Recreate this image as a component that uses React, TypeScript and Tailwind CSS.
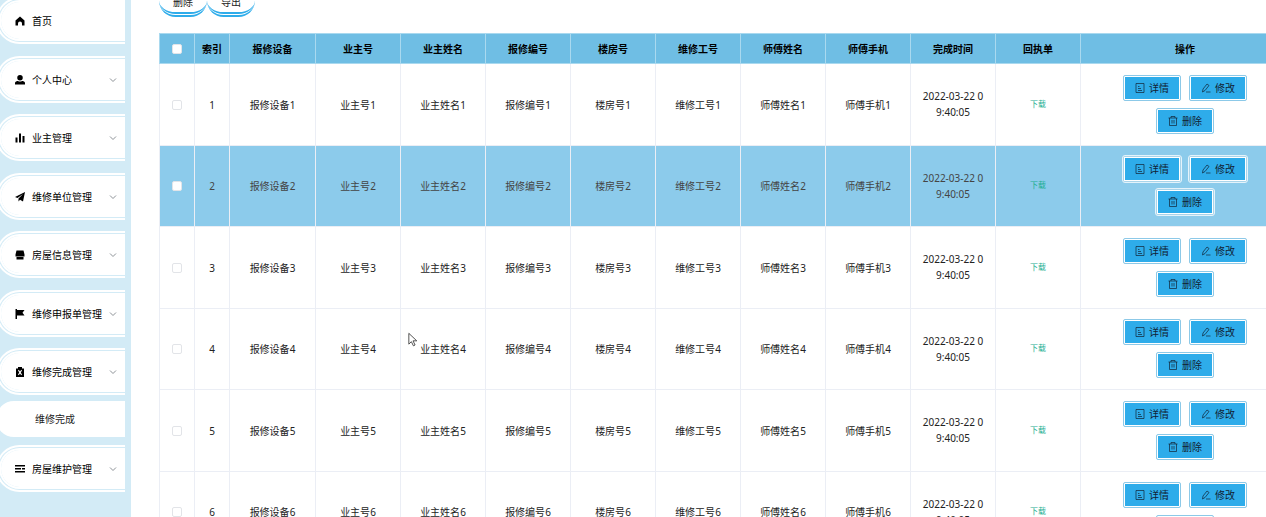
import { Fragment } from "react";
import type { ReactNode } from "react";

const icon = "h-[10px] w-[10px] shrink-0";

function Solid({ d }: { d: string }) {
  return (
    <svg viewBox="0 0 20 20" className={icon} fill="currentColor" fillRule="evenodd" aria-hidden="true">
      <path d={d} />
    </svg>
  );
}

const shapes = {
  home: "M10 1 1 9v10h5v-4a4 4 0 0 1 8 0v4h5V9z",
  user: "M10 0a5.500 5.500 0 1 1 0 11a5.500 5.500 0 0 1 0-11zM0 19v-3c0-3 4-4 6-4 2 1.500 6 1.500 8 0 2 0 6 1 6 4v3z",
  chart: "M1 9h4v10H1zM8 1h4v18H8zM15 6h4v13h-4z",
  plane: "M20 0 16 19 10 15.500 7 19v-6L16 4 5 12 0 10z",
  shop: "M3 1h14l2 8v4H1V9zM3 14h14v5H3z",
  flag: "M1 0h3v2h15l-4 5.500 4 5.500H4v7H1z",
  clip: "M2 3h4V0h8v3h4v17H2zM6 7l2.500 4L6 15l1.500 1.500L10 13l2.500 3.500L14 15l-2.500-4L14 7l-1.500-1.500L10 9 7.500 5.500z",
  list: "M0 2h20v3H0zM0 8h12v3H0zM14 8h6v3h-6zM0 14h20v3H0z",
};

const menu: { label: string; shape: string; sub?: string; leaf?: boolean }[] = [
  { label: "首页", shape: shapes.home, leaf: true },
  { label: "个人中心", shape: shapes.user },
  { label: "业主管理", shape: shapes.chart },
  { label: "维修单位管理", shape: shapes.plane },
  { label: "房屋信息管理", shape: shapes.shop },
  { label: "维修申报单管理", shape: shapes.flag },
  { label: "维修完成管理", shape: shapes.clip, sub: "维修完成" },
  { label: "房屋维护管理", shape: shapes.list },
];

function Outline({ children }: { children: ReactNode }) {
  return (
    <svg viewBox="0 0 20 20" className={icon} fill="none" stroke="currentColor" strokeWidth="1.4" aria-hidden="true">
      {children}
    </svg>
  );
}

const actions = [
  { label: "详情", art: <path d="M2 1h16v18H2zM6 7h3M6 11h6M6 15h8" /> },
  { label: "修改", art: <path d="M4 12 12 2l4 3-8 10-5 3zM10 18h9" /> },
  { label: "删除", art: <path d="M1 4h18M6 4V1h8v3M3 4v15h14V4M8 8v7M12 8v7" /> },
];

const columns = ["报修设备", "业主号", "业主姓名", "报修编号", "楼房号", "维修工号", "师傅姓名", "师傅手机"];
const rows = [1, 2, 3, 4, 5, 6];
const box = "mx-auto block h-[10px] w-[10px] appearance-none rounded-[2px] border border-[#e2e4e8] bg-white";
const cell = "border border-[#ebeef5] p-0";
const head = "border border-[#a9d9ef] p-0 font-bold";
const frame = "rounded-[3px] border p-px";

export default function App() {
  return (
    <div className="flex h-screen overflow-hidden bg-white font-['Noto_Sans','Noto_Sans_CJK_SC',sans-serif] text-[10px] leading-4 text-[#222]">
      <nav className="w-[131px] shrink-0 overflow-hidden bg-[#d3ebf6] pr-[6px]">
        <ul className="-mt-[3px] -ml-1">
          {menu.map((m) => (
            <Fragment key={m.label}>
              <li className="mb-3 even:mb-[11px] last:mb-0 has-[+.sub]:mb-[6px]">
                <button className="flex h-[47px] w-full items-center rounded-l-[26px] border-[5px] border-r-0 border-double border-white bg-white bg-clip-padding pr-2 pl-[14px] text-black">
                  <Solid d={m.shape} />
                  <span className="ml-[7px] whitespace-nowrap">{m.label}</span>
                  {!m.leaf && (
                    <svg viewBox="0 0 8 8" className="ml-auto h-2 w-2 shrink-0" fill="none" stroke="#8d9297" aria-hidden="true">
                      <path d="M1 2.500 4 5.500 7 2.500" />
                    </svg>
                  )}
                </button>
              </li>
              {m.sub && (
                <li className="sub mb-2">
                  <a href="#done" className="flex h-9 items-center rounded-l-[18px] bg-white pl-[39px]">
                    {m.sub}
                  </a>
                </li>
              )}
            </Fragment>
          ))}
        </ul>
      </nav>
      <main className="min-w-0 flex-1 overflow-hidden pl-7">
        <div className="-mt-4 flex">
          {["删除", "导出"].map((t) => (
            <button key={t} className="flex h-[33px] w-12 items-center justify-center rounded-[20px] border-b-[5px] border-double border-[#2eacea] bg-white pt-[7px]">
              {t}
            </button>
          ))}
        </div>
        <table className="mt-4 w-[calc(100%+24px)] table-fixed border-collapse text-center">
          <colgroup>
            <col className="w-[35px]" />
            <col className="w-[35px]" />
            <col className="w-[86px]" />
            {[...columns.slice(1), "time", "file"].map((c) => (
              <col key={c} className="w-[85px]" />
            ))}
            <col />
          </colgroup>
          <thead>
            <tr className="h-[30px] bg-[#6fbee4] text-black">
              <th className={head}>
                <input type="checkbox" aria-label="全选" className={box} />
              </th>
              {["索引", ...columns, "完成时间", "回执单", "操作"].map((c) => (
                <th key={c} className={head}>{c}</th>
              ))}
            </tr>
          </thead>
          <tbody>
            {rows.map((n) => (
              <tr key={n} className={n === 2 ? "h-[81px] bg-[#8ccbeb] text-[#444]" : "h-[82px] even:h-[81px]"}>
                <td className={cell}>
                  <input type="checkbox" aria-label={`选择${n}`} className={box} />
                </td>
                <td className={cell}>{n}</td>
                {columns.map((c) => (
                  <td key={c} className={cell}>{c}{n}</td>
                ))}
                <td className={`${cell} pb-px`}>2022-03-22 0<br />9:40:05</td>
                <td className={`${cell} pb-[2px]`}>
                  <a href="#file" className="block text-[8px] text-[#1cae91]">下载</a>
                </td>
                <td className={`${cell} pb-px`}>
                  <div className="mx-auto flex w-[140px] flex-wrap justify-center gap-x-[6px] gap-y-[5px]">
                    {actions.map((a) => (
                      <button
                        key={a.label}
                        className={n === 2 ? `${frame} border-[#e4f3fb] bg-[#a9d4ea]` : `${frame} border-transparent`}
                      >
                        <span
                          className={
                            n === 2
                              ? "flex h-6 w-14 items-center justify-center gap-1 border border-white bg-[#2eacea] text-[#123]"
                              : "flex h-6 w-14 items-center justify-center gap-1 rounded-[1px] border border-white bg-[#2eacea] text-[#123] outline outline-[#8cc9e8]"
                          }
                        >
                          <Outline>{a.art}</Outline>
                          {a.label}
                        </span>
                      </button>
                    ))}
                  </div>
                </td>
              </tr>
            ))}
          </tbody>
        </table>
      </main>
      <svg viewBox="0 0 12 18" className="absolute top-[332px] left-[408px] h-4 w-[10px]" fill="white" stroke="#333" aria-hidden="true">
        <path d="M1 1v13l3-3 2.500 5 2-1L6 10h4.500z" />
      </svg>
    </div>
  );
}
